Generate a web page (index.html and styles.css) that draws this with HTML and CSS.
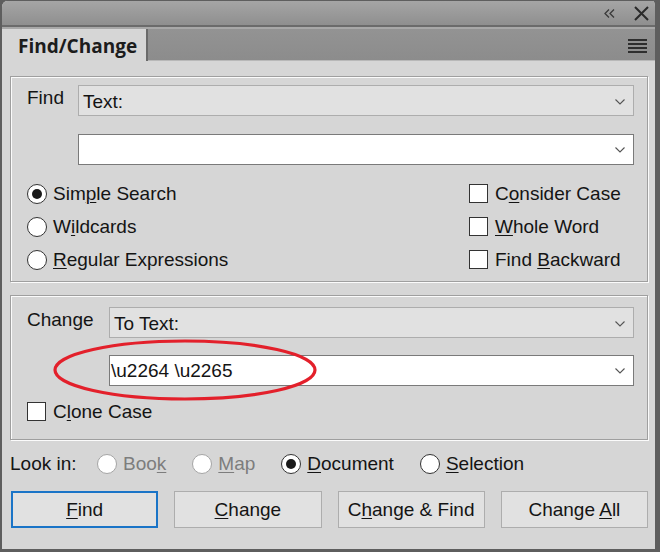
FILE: index.html
```html
<!DOCTYPE html>
<html>
<head>
<meta charset="utf-8">
<link rel="stylesheet" href="styles.css">
</head>
<body>
<div class="window">
  <div class="titlebar">
    <svg class="collapse" width="11" height="9" viewBox="0 0 11 9"><polyline points="5,0.5 1,4.5 5,8.5" fill="none" stroke="#3a3a3a" stroke-width="1.3"/><polyline points="10,0.5 6,4.5 10,8.5" fill="none" stroke="#3a3a3a" stroke-width="1.3"/></svg>
    <svg class="close" width="15" height="15" viewBox="0 0 15 15"><path d="M1 1 L14 14 M14 1 L1 14" stroke="#2a2a2a" stroke-width="2"/></svg>
  </div>
  <div class="tabrow">
    <div class="tab">Find/Change</div>
    <svg class="menu" width="19" height="14" viewBox="0 0 19 14"><rect x="0" y="0" width="19" height="2" fill="#2e2e2e"/><rect x="0" y="4" width="19" height="2" fill="#2e2e2e"/><rect x="0" y="8" width="19" height="2" fill="#2e2e2e"/><rect x="0" y="12" width="19" height="2" fill="#2e2e2e"/></svg>
  </div>
  <div class="content">
    <div class="group find-group">
      <div class="field-row">
        <span class="field-label find-label">Find</span>
        <div class="select"><span>Text:</span><svg class="chev" width="10" height="6" viewBox="0 0 10 6"><polyline points="0.5,0.5 5,5 9.5,0.5" fill="none" stroke="#555" stroke-width="1.1"/></svg></div>
      </div>
      <div class="field-row input-row">
        <span class="field-label find-label"></span>
        <div class="combo"><span></span><svg class="chev" width="10" height="6" viewBox="0 0 10 6"><polyline points="0.5,0.5 5,5 9.5,0.5" fill="none" stroke="#555" stroke-width="1.1"/></svg></div>
      </div>
      <div class="options">
        <div class="opt-col">
          <label class="opt"><span class="radio on"></span><span>Sim<u>p</u>le Search</span></label>
          <label class="opt"><span class="radio"></span><span>W<u>i</u>ldcards</span></label>
          <label class="opt"><span class="radio"></span><span><u>R</u>egular Expressions</span></label>
        </div>
        <div class="opt-col">
          <label class="opt"><span class="check"></span><span>C<u>o</u>nsider Case</span></label>
          <label class="opt"><span class="check"></span><span><u>W</u>hole Word</span></label>
          <label class="opt"><span class="check"></span><span>Find <u>B</u>ackward</span></label>
        </div>
      </div>
    </div>
    <div class="group change-group">
      <div class="field-row">
        <span class="field-label change-label">Change</span>
        <div class="select"><span>To Text:</span><svg class="chev" width="10" height="6" viewBox="0 0 10 6"><polyline points="0.5,0.5 5,5 9.5,0.5" fill="none" stroke="#555" stroke-width="1.1"/></svg></div>
      </div>
      <div class="field-row input-row">
        <span class="field-label change-label"></span>
        <div class="combo"><span class="value">\u2264 \u2265</span><svg class="chev" width="10" height="6" viewBox="0 0 10 6"><polyline points="0.5,0.5 5,5 9.5,0.5" fill="none" stroke="#555" stroke-width="1.1"/></svg></div>
      </div>
      <label class="opt clone"><span class="check"></span><span>C<u>l</u>one Case</span></label>
      <svg class="highlight" width="270" height="66" viewBox="0 0 270 66"><ellipse cx="134" cy="32" rx="130" ry="29" fill="none" stroke="#e3202b" stroke-width="3.2"/></svg>
    </div>
    <div class="lookin">
      <span class="lookin-label">Look in:</span>
      <label class="opt dis"><span class="radio"></span><span>Boo<u>k</u></span></label>
      <label class="opt dis"><span class="radio"></span><span><u>M</u>ap</span></label>
      <label class="opt"><span class="radio on"></span><span><u>D</u>ocument</span></label>
      <label class="opt"><span class="radio"></span><span><u>S</u>election</span></label>
    </div>
    <div class="buttons">
      <div class="btn default"><span><u>F</u>ind</span></div>
      <div class="btn"><span><u>C</u>hange</span></div>
      <div class="btn"><span>C<u>h</u>ange &amp; Find</span></div>
      <div class="btn"><span>Change <u>A</u>ll</span></div>
    </div>
  </div>
</div>
</body>
</html>
```
FILE: styles.css
```css
html, body {
  margin: 0;
  padding: 0;
  background: #5e5e5e;
}
.window {
  width: 660px;
  height: 552px;
  box-sizing: border-box;
  border: 2px solid #5e5e5e;
  border-top-width: 1px;
  border-right-width: 5px;
  border-bottom-width: 3px;
  border-radius: 7px 7px 0 0;
  background: #d6d6d6;
  display: flex;
  flex-direction: column;
  overflow: hidden;
  font-family: "Liberation Sans", Arial, sans-serif;
  font-size: 19px;
  color: #141414;
}
.titlebar {
  height: 24px;
  flex: none;
  background: linear-gradient(#a5a5a5, #8f8f8f);
  border-bottom: 2px solid #6b6b6b;
  display: flex;
  align-items: center;
  justify-content: flex-end;
  padding-right: 6px;
}
.collapse {
  margin-right: 19px;
  margin-top: 1px;
}
.tabrow {
  height: 34px;
  flex: none;
  background: linear-gradient(#a8a8a8 0, #a8a8a8 2px, #939393 2px, #8c8c8c);
  border-bottom: 1px solid #b8b8b8;
  display: flex;
  align-items: center;
  justify-content: space-between;
  padding-right: 8px;
  box-sizing: border-box;
}
.tab {
  align-self: stretch;
  width: 146px;
  box-sizing: border-box;
  background: #d6d6d6;
  border-right: 2px solid #6a6a6a;
  margin-top: 2px;
  margin-bottom: -1px;
  font-family: "Open Sans", sans-serif;
  font-weight: 700;
  font-size: 19px;
  color: #1c1c1c;
  padding-left: 16px;
  display: flex;
  align-items: center;
  padding-top: 2px;
}
.menu {
  margin-top: 4px;
}
.content {
  flex: 1;
  padding: 15px 7px 0 8px;
  display: flex;
  flex-direction: column;
}
.group {
  border: 1px solid #9f9f9f;
  box-shadow: inset 1px 1px 0 #fbfbfb, 1px 1px 0 #fbfbfb;
  position: relative;
}
.find-group {
  height: 206px;
  box-sizing: border-box;
  padding: 8px 13px 0 16px;
}
.change-group {
  height: 145px;
  box-sizing: border-box;
  margin-top: 13px;
  padding: 11px 13px 0 16px;
}
.field-row {
  display: flex;
  align-items: center;
}
.input-row {
  margin-top: 18px;
}
.change-group .input-row {
  margin-top: 17px;
}
.field-label {
  flex: none;
}
.find-label {
  width: 51px;
  align-self: flex-start;
  margin-top: 2px;
}
.change-label {
  width: 82px;
  align-self: flex-start;
  margin-top: 2px;
}
.select, .combo {
  flex: 1;
  box-sizing: border-box;
  display: flex;
  align-items: center;
  justify-content: space-between;
}
.select {
  height: 31px;
  background: #e1e1e1;
  border: 1px solid #adadad;
  padding: 2px 8px 0 4px;
}
.combo {
  height: 31px;
  background: #ffffff;
  border: 1px solid #7a7a7a;
  padding: 0 8px 0 1px;
}
.chev {
  flex: none;
}
.options {
  display: grid;
  grid-template-columns: 1fr 165px;
  margin-top: 12px;
}
.opt-col {
  display: flex;
  flex-direction: column;
}
.opt {
  height: 33px;
  display: flex;
  align-items: center;
  white-space: nowrap;
}
.radio {
  width: 18px;
  height: 18px;
  border: 1px solid #333;
  border-radius: 50%;
  background: #fff;
  margin-right: 6px;
  flex: none;
  position: relative;
}
.radio.on::after {
  content: "";
  position: absolute;
  left: 4px;
  top: 4px;
  width: 10px;
  height: 10px;
  border-radius: 50%;
  background: #1a1a1a;
}
.check {
  width: 17px;
  height: 17px;
  border: 1px solid #333;
  background: #fff;
  margin-right: 7px;
  flex: none;
}
u {
  text-decoration-thickness: 1px;
  text-underline-offset: 2px;
}
.clone {
  margin-top: 9px;
  height: 33px;
}
.highlight {
  position: absolute;
  left: 40px;
  top: 42px;
}
.lookin {
  display: flex;
  align-items: center;
  height: 33px;
  margin-top: 7px;
}
.lookin-label {
  width: 87px;
  flex: none;
}
.lookin .opt {
  margin-right: 26px;
}
.opt.dis {
  color: #7d7d7d;
}
.opt.dis .radio {
  border-color: #a5a5a5;
}
.buttons {
  display: grid;
  grid-template-columns: repeat(4, 1fr);
  column-gap: 16px;
  margin-top: 11px;
  padding-left: 1px;
}
.btn {
  height: 37px;
  box-sizing: border-box;
  background: #e1e1e1;
  border: 1px solid #adadad;
  display: flex;
  align-items: center;
  justify-content: center;
  padding-top: 1px;
}
.btn.default {
  border: 2px solid #1a74c7;
}
```
